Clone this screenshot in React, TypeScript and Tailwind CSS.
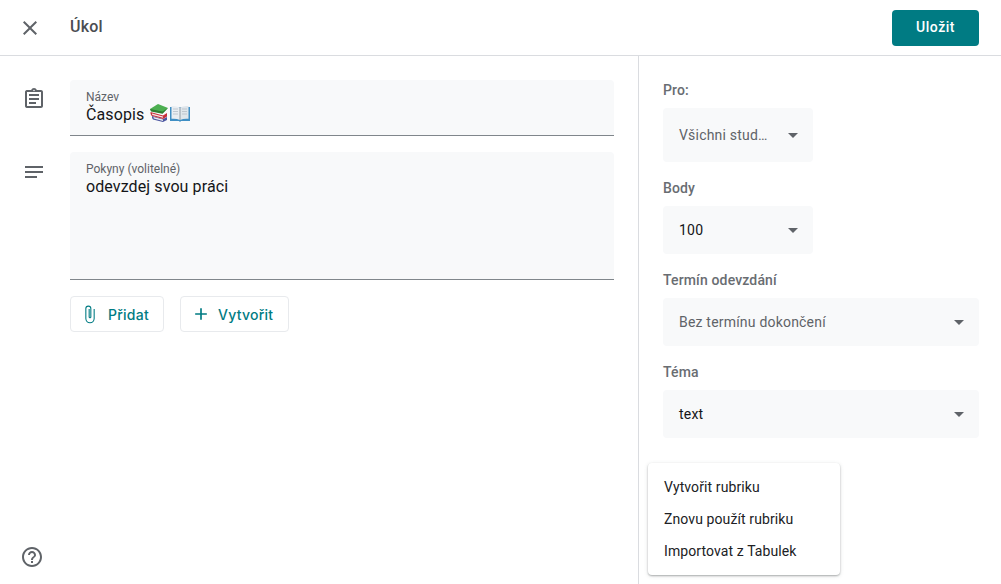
import {
  MdAdd,
  MdArrowDropDown,
  MdClose,
  MdHelpOutline,
  MdNotes,
  MdOutlineAssignment,
} from 'react-icons/md';

function BooksEmoji() {
  return (
    <svg width="20" height="20" viewBox="0 0 20 20" className="inline-block">
      <path d="M3 12 14 15 18 13V16L14 18 4 15.5Q2.6 14 3 12Z" fill="#4a55a0" />
      <path d="M4.5 13 14 15.6V17L4.8 14.6Z" fill="#eceff1" />
      <path d="M1.5 8 14 11.5 18 9V12.5L14 15 2.5 11.8Q1.2 10 1.5 8Z" fill="#c62f3a" />
      <path d="M3 9.4 14 12.4V13.8L3.2 10.9Z" fill="#f3e6e6" />
      <path d="M1 5 9 0 19 4 13.5 9.2 2 6.8Z" fill="#4caf50" />
      <path d="M1 5 13.5 7.6 19 4 13.5 9.8 2 7.4Z" fill="#2e7d32" />
    </svg>
  );
}

function OpenBookEmoji() {
  return (
    <svg width="20" height="20" viewBox="0 0 20 20" className="inline-block">
      <path d="M0 3H20V17H11L10 18 9 17H0Z" fill="#3f8fc4" />
      <path d="M1.5 2Q6 1.5 10 3.5V16Q6 14.2 1.5 14.8Z" fill="#e9eef2" />
      <path d="M18.5 2Q14 1.5 10 3.5V16Q14 14.2 18.5 14.8Z" fill="#dfe6eb" />
      <path d="M9.6 3.5H10.4V16H9.6Z" fill="#7d8a94" />
      <path d="M3 5H8M3 7.5H8M3 10H8M12 5H17M12 7.5H17M12 10H17" stroke="#b5bec6" strokeWidth="0.8" />
    </svg>
  );
}

function PaperclipIcon() {
  return (
    <svg width="20" height="20" viewBox="0 0 24 24" fill="none" stroke="currentColor" strokeWidth="1.3">
      <path d="M17 6v11.5a5 5 0 0 1-10 0V5.5a3 3 0 0 1 6 0v10a1 1 0 0 1-2 0V6" />
    </svg>
  );
}

interface SelectProps {
  label: string;
  value: string;
  muted?: boolean;
  narrow?: boolean;
  tall?: boolean;
}

function SelectField({ label, value, muted, narrow, tall }: SelectProps) {
  return (
    <div className="flex flex-col">
      <label className="flex h-[20px] items-center text-[14px] font-medium tracking-[0.15px] text-[#696d72]">
        {label}
      </label>
      <div
        className={`mt-[8px] flex items-center justify-between rounded-[4px] bg-[#f8f9fa] pl-[16px] pr-[8px] ${
          narrow ? 'w-[150px]' : 'w-full'
        } ${tall ? 'h-[54px]' : 'h-[48px]'} ${muted ? 'text-[#5f6368]' : 'text-[#141518]'}`}
      >
        <span className="text-[14px] tracking-[0.2px]">{value}</span>
        <MdArrowDropDown className="text-[24px] text-[#5f6368]" />
      </div>
    </div>
  );
}

export default function App() {
  return (
    <div className="relative flex h-[584px] w-[1001px] flex-col overflow-hidden bg-white font-['Roboto',sans-serif]">
      <header className="flex h-[56px] shrink-0 items-center justify-between border-b border-[#dadce0] pl-[18px] pr-[22px]">
        <div className="flex items-center">
          <MdClose className="text-[24px] text-[#5f6368]" />
          <h1 className="mb-[2px] ml-[28px] text-[16px] font-medium tracking-[0.2px] text-[#4a4d52]">Úkol</h1>
        </div>
        <button className="h-[36px] w-[87px] rounded-[4px] bg-[#007b83] text-[14px] font-medium tracking-[0.5px] text-white">
          Uložit
        </button>
      </header>

      <div className="flex min-h-0 flex-1">
        <main className="flex w-[639px] flex-col justify-between border-r border-[#dadce0] pb-[15px] pl-[22px] pr-[24px] pt-[24px]">
          <div className="flex flex-col gap-[16px]">
            <div className="flex">
              <MdOutlineAssignment className="mt-[7px] shrink-0 text-[24px] text-[#5f6368]" />
              <div className="ml-[24px] h-[56px] flex-1 rounded-t-[4px] border-b border-[#80868b] bg-[#f8f9fa] px-[16px] pt-[10px]">
                <div className="text-[12px] leading-[14px] text-[#5f6368]">Název</div>
                <div className="flex h-[22px] items-center text-[16px] tracking-[0.1px] text-[#141518]">
                  Časopis
                  <span className="mb-[2px] ml-[5px] flex items-center gap-[1px]">
                    <BooksEmoji />
                    <OpenBookEmoji />
                  </span>
                </div>
              </div>
            </div>
            <div className="flex">
              <MdNotes className="mt-[8px] shrink-0 text-[24px] text-[#5f6368]" />
              <div className="ml-[24px] h-[128px] flex-1 rounded-t-[4px] border-b border-[#80868b] bg-[#f8f9fa] px-[16px] pt-[10px]">
                <div className="text-[12px] leading-[14px] text-[#5f6368]">Pokyny (volitelné)</div>
                <div className="text-[16px] leading-[22px] tracking-[0.1px] text-[#141518]">odevzdej svou práci</div>
              </div>
            </div>
            <div className="ml-[48px] flex gap-[16px] font-['Inter',sans-serif] text-[14px] font-medium tracking-[0.25px] text-[#007b83]">
              <button className="flex h-[36px] w-[94px] items-center rounded-[4px] border border-[#e8eaed] pl-[9px]">
                <PaperclipIcon />
                <span className="ml-[8px]">Přidat</span>
              </button>
              <button className="flex h-[36px] w-[109px] items-center rounded-[4px] border border-[#e8eaed] pl-[10px]">
                <MdAdd className="text-[20px]" />
                <span className="ml-[7px]">Vytvořit</span>
              </button>
            </div>
          </div>
          <MdHelpOutline className="-ml-[2px] text-[24px] text-[#5f6368]" />
        </main>

        <aside className="flex flex-1 flex-col gap-[16px] pl-[24px] pr-[22px] pt-[24px]">
          <SelectField label="Pro:" value="Všichni stud…" muted narrow tall />
          <SelectField label="Body" value="100" narrow />
          <SelectField label="Termín odevzdání" value="Bez termínu dokončení" muted />
          <SelectField label="Téma" value="text" />
        </aside>
      </div>

      <div className="absolute left-[648px] top-[463px] w-[192px] rounded-[4px] bg-white py-[8px] text-[14px] tracking-[0.1px] text-[#202124] shadow-[0_1px_2px_rgba(60,64,67,0.4),0_1px_5px_rgba(60,64,67,0.1)]">
        <div className="flex h-[32px] items-center px-[16px]">Vytvořit rubriku</div>
        <div className="flex h-[32px] items-center px-[16px]">Znovu použít rubriku</div>
        <div className="flex h-[32px] items-center px-[16px]">Importovat z Tabulek</div>
      </div>
    </div>
  );
}
